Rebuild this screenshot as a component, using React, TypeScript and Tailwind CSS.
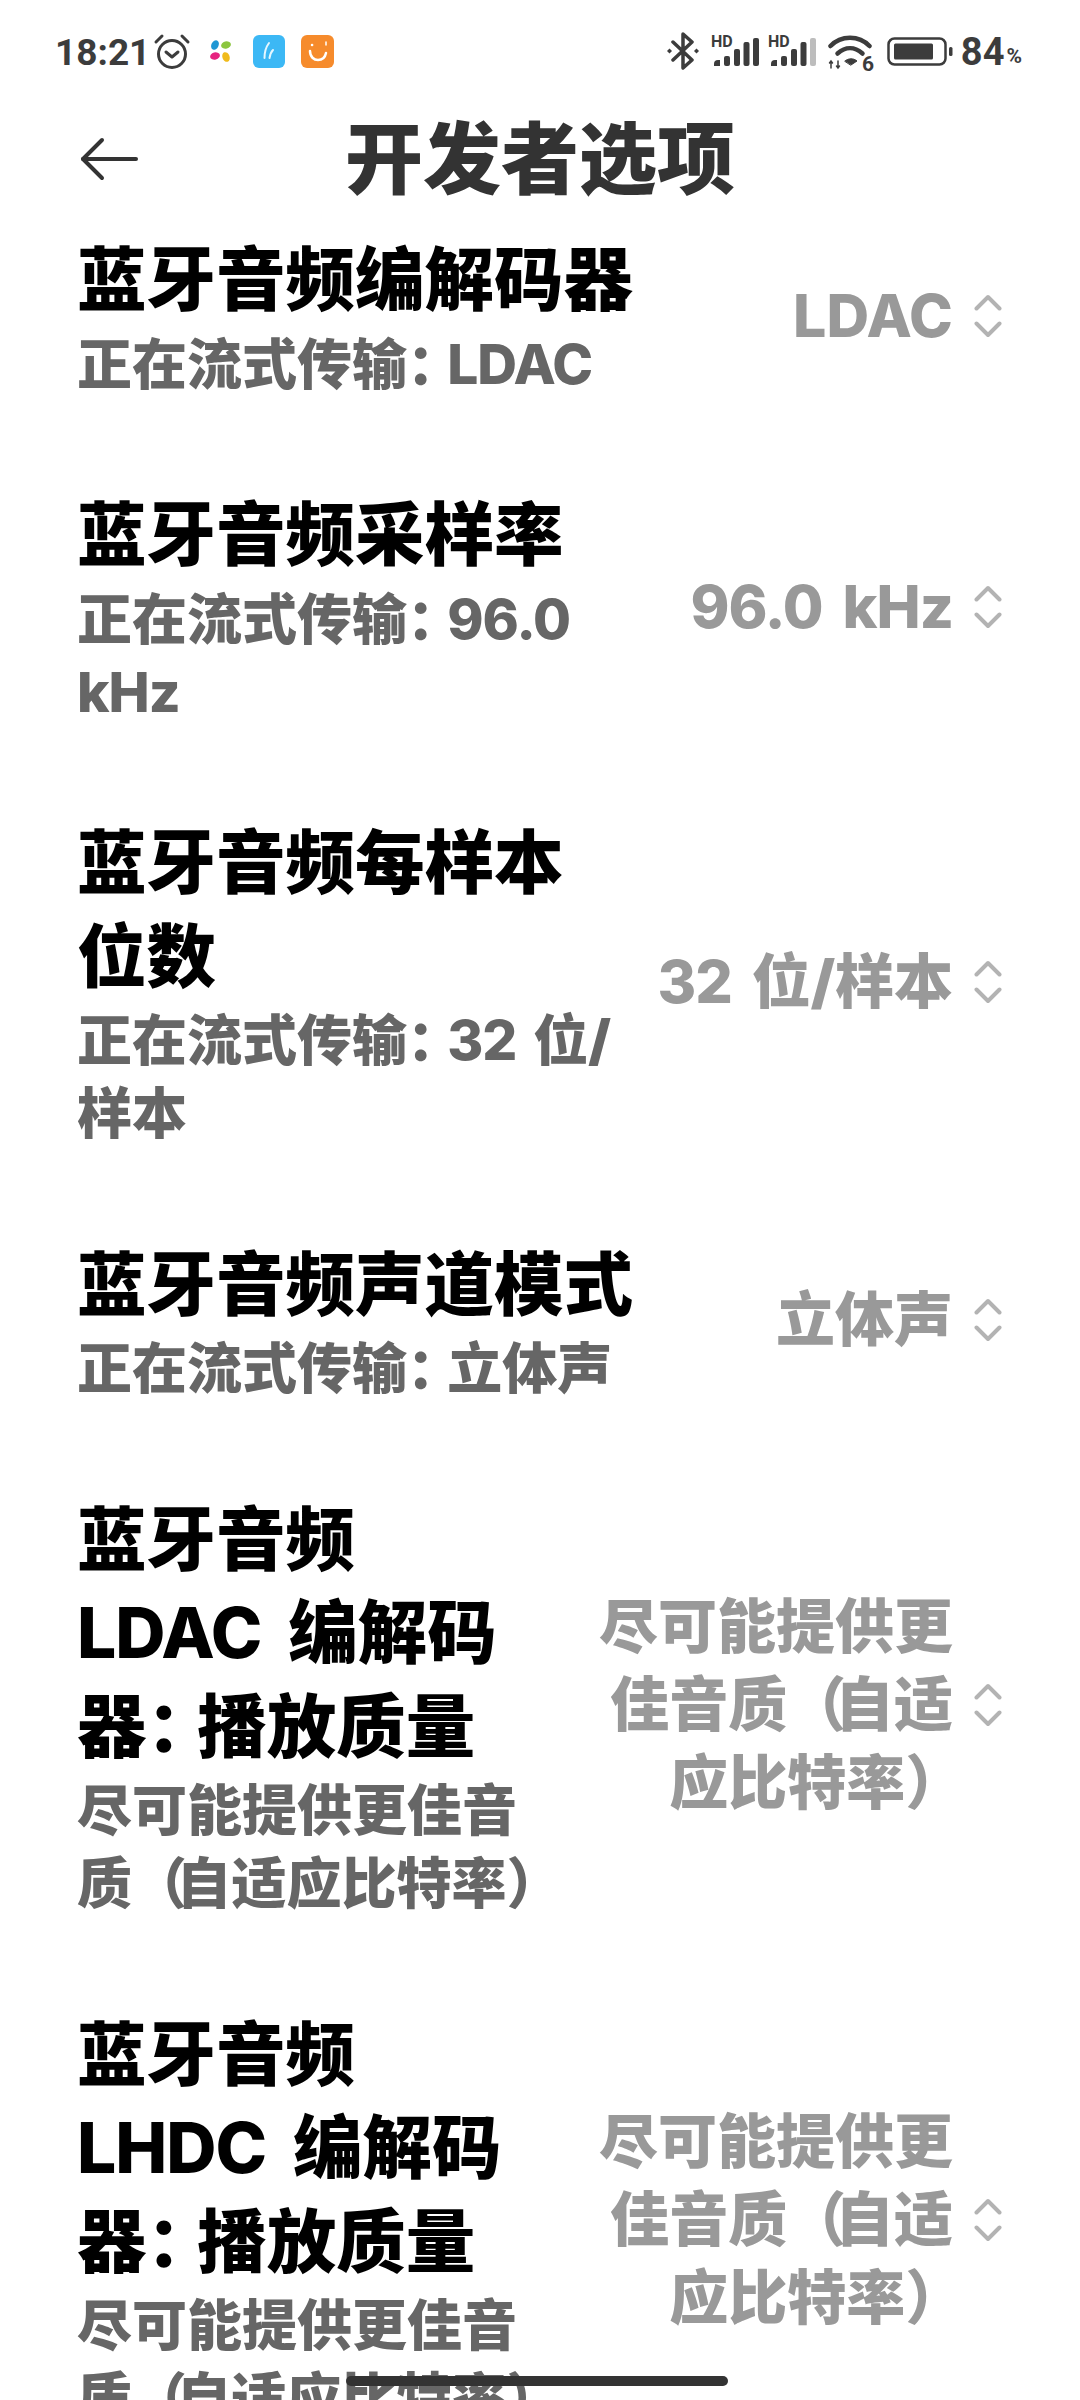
import type { ReactNode } from "react";

// fullwidth punctuation, a bit tighter than the font's default advance
function P({ children }: { children: ReactNode }) {
  return <span className="-mr-[0.19em]">{children}</span>;
}

function Colon() {
  return <span className="-mr-[0.27em]">：</span>;
}

// latin runs are lighter and tighter than the CJK around them
function L({ children }: { children: ReactNode }) {
  return <span className="font-extrabold tracking-[-1px]">{children}</span>;
}

const quality = <>尽可能提供更佳音<br />质<P>（</P>自适应比特率<P>）</P></>;
const qualityValue = <>尽可能提供更<br />佳音质<P>（</P>自适<br />应比特率<P>）</P></>;

const rows: { title: ReactNode; sub: ReactNode; value: ReactNode }[] = [
  {
    title: "蓝牙音频编解码器",
    sub: <>正在流式传输<Colon /><L>LDAC</L></>,
    value: <span className="font-extrabold">LDAC</span>,
  },
  {
    title: "蓝牙音频采样率",
    sub: <>正在流式传输<Colon /><L>96.0</L><br /><L>kHz</L></>,
    value: <L>96.0 kHz</L>,
  },
  {
    title: <>蓝牙音频每样本<br />位数</>,
    sub: <>正在流式传输<Colon /><L>32</L> 位/<br />样本</>,
    value: <><L>32</L> 位/样本</>,
  },
  {
    title: "蓝牙音频声道模式",
    sub: <>正在流式传输<Colon />立体声</>,
    value: "立体声",
  },
  {
    title: <>蓝牙音频<br /><L>LDAC</L> 编解码<br />器<Colon />播放质量</>,
    sub: quality,
    value: qualityValue,
  },
  {
    title: <>蓝牙音频<br /><L>LHDC</L> 编解码<br />器<Colon />播放质量</>,
    sub: quality,
    value: qualityValue,
  },
];

function Signal({ last = "#3c3c3c" }: { last?: string }) {
  return (
    <svg width="48" height="32" viewBox="0 0 48 32">
      <text x="0" y="12" fontSize="16" fontWeight="700" fontFamily="Roboto, sans-serif" fill="#3c3c3c">HD</text>
      <path d="M3 31v-2a4 4 0 0 1 4-4h2v6z" fill="#3c3c3c" />
      <rect x="13" y="21" width="6" height="10" rx="2" fill="#3c3c3c" />
      <rect x="23" y="14" width="6" height="17" rx="2" fill="#3c3c3c" />
      <rect x="32.500" y="7" width="6" height="24" rx="2" fill="#3c3c3c" />
      <rect x="42" y="3" width="6" height="28" rx="2" fill={last} />
    </svg>
  );
}

function StatusBar() {
  return (
    <div className="flex h-[102px] items-center justify-between pl-[55px] pr-[58px] text-[#3c3c3c] [font-family:Roboto,sans-serif]">
      <div className="flex items-center">
        <span className="mt-[2px] text-[37px] font-bold leading-none">18:21</span>
        <svg className="ml-[3px]" width="38" height="37" viewBox="0 0 38 37" fill="none" stroke="#3c3c3c" strokeWidth="3" strokeLinecap="round" strokeLinejoin="round">
          <circle cx="19" cy="21" r="13.500" />
          <path d="M13 19l6 5 6-5" />
          <path d="M3 9l6-6M35 9l-6-6" />
        </svg>
        <svg className="ml-[18px]" width="24" height="24" viewBox="0 0 24 24">
          <ellipse cx="6" cy="6" rx="3.600" ry="5" fill="#1f97d4" transform="rotate(25 6 6)" />
          <ellipse cx="17" cy="6" rx="5" ry="3.600" fill="#8cc63f" transform="rotate(-15 17 6)" />
          <ellipse cx="6" cy="17" rx="5" ry="3.600" fill="#e6247f" transform="rotate(-15 6 17)" />
          <ellipse cx="17" cy="18" rx="3.600" ry="5" fill="#f0bb1c" transform="rotate(-20 17 18)" />
        </svg>
        <div className="ml-[20px] flex h-[33px] w-[32px] items-center justify-center rounded-[6px] bg-[#3cb8f5]">
          <svg width="16" height="20" viewBox="0 0 16 20" fill="none" stroke="#e6f7ff" strokeWidth="2" strokeLinecap="round">
            <path d="M8 2C5 6 3.500 11 3.500 17" />
            <path d="M12 9c-2 2-3 5-3.500 8" />
          </svg>
        </div>
        <div className="ml-[16px] flex h-[33px] w-[33px] items-center justify-center rounded-[6px] bg-[#f68b2c]">
          <svg width="26" height="24" viewBox="0 0 26 24" fill="none" stroke="#fff" strokeWidth="2.500" strokeLinecap="round">
            <path d="M5 12c0 6 4 9 8 9s7-2 8-7" />
            <path d="M7 6h.1" />
            <path d="M21 3v3" strokeWidth="1.500" />
          </svg>
        </div>
      </div>
      <div className="flex items-center">
        <svg width="34" height="38" viewBox="0 0 34 38" fill="none" stroke="#3c3c3c" strokeWidth="3.500" strokeLinejoin="round" strokeLinecap="round">
          <path d="M7 10l19 18-9 8V2l9 8L7 28" />
          <path d="M3.500 16.500L1 19l2.500 2.500L6 19z" fill="#3c3c3c" stroke="none" />
          <path d="M30.500 16.500L28 19l2.500 2.500L33 19z" fill="#3c3c3c" stroke="none" />
        </svg>
        <div className="ml-[11px] flex gap-[9px]">
          <Signal />
          <Signal last="#bdbdbd" />
        </div>
        <svg className="ml-[12px] mt-[4px]" width="46" height="37" viewBox="0 0 46 37" fill="none" stroke="#3c3c3c" strokeWidth="4.500" strokeLinecap="round">
          <path d="M2.500 11C13 0 31 0 41.500 11" />
          <path d="M9.500 18.500c8-7 17-7 25 0" />
          <path d="M17 26c3.500-3 8.500-3 12 0l-6 4z" fill="#3c3c3c" strokeWidth="1" />
          <path d="M3 26v7M1.500 28L3 26l1.500 2M10 33v-7M8.500 31l1.500 2 1.500-2" strokeWidth="1.500" />
          <text x="34" y="36" fontSize="21" fontWeight="700" fill="#3c3c3c" stroke="none" fontFamily="Roboto, sans-serif">6</text>
        </svg>
        <svg className="ml-[13px]" width="66" height="29" viewBox="0 0 66 29">
          <rect x="1.500" y="1.500" width="57" height="26" rx="6" fill="none" stroke="#3c3c3c" strokeWidth="2.500" />
          <rect x="7" y="6.500" width="39" height="16" rx="1.500" fill="#3c3c3c" />
          <rect x="62" y="10" width="3.500" height="9" rx="1.500" fill="#3c3c3c" />
        </svg>
        <span className="ml-[8px] mt-[2px] text-[38px] font-bold leading-none">84</span>
        <span className="ml-[2px] mt-[10px] text-[21px] font-bold leading-none">%</span>
      </div>
    </div>
  );
}

function Chevrons() {
  return (
    <svg width="28" height="44" viewBox="0 0 28 44" fill="none" stroke="#b3b3b3" strokeWidth="4" strokeLinecap="round" strokeLinejoin="round">
      <path d="M2.500 14.500L14 3l11.500 11.500" />
      <path d="M2.500 29.500L14 41l11.500-11.500" />
    </svg>
  );
}

export default function App() {
  return (
    <div className="relative h-[2400px] w-[1080px] overflow-hidden bg-white [font-family:Inter,'Noto_Sans_CJK_SC',sans-serif]">
      <StatusBar />
      {/* Title bar */}
      <div className="relative flex h-[114px] items-center justify-center text-[#333]">
        <svg className="absolute left-[80px] top-[35px]" width="58" height="44" viewBox="0 0 58 44" fill="none" stroke="#333" strokeWidth="4" strokeLinecap="round" strokeLinejoin="round">
          <path d="M22 3L3 22l19 19" />
          <path d="M3 22h53" />
        </svg>
        <h1 className="mt-[2px] text-[78px] font-black leading-none">开发者选项</h1>
      </div>
      {/* Settings list */}
      <div className="flex flex-col gap-[88.500px] pl-[77px] pr-[78px] pt-[18px]">
        {rows.map((r, i) => (
          <div key={i} className="flex items-center justify-between">
            <div className="whitespace-nowrap">
              <div className="text-[69.500px] font-black leading-[93.500px] text-black [word-spacing:13px]">{r.title}</div>
              <div className="text-[55px] font-black leading-[73px] text-[#666] [word-spacing:6px]">{r.sub}</div>
            </div>
            <div className="flex items-center gap-[21px] pb-[3px]">
              <div className="whitespace-nowrap text-right text-[59px] font-black leading-[78px] text-[#999] [word-spacing:8px]">{r.value}</div>
              <Chevrons />
            </div>
          </div>
        ))}
      </div>
      {/* Home indicator */}
      <div className="absolute bottom-[14px] left-[346px] h-[10px] w-[382px] rounded-full bg-[#333]" />
    </div>
  );
}
